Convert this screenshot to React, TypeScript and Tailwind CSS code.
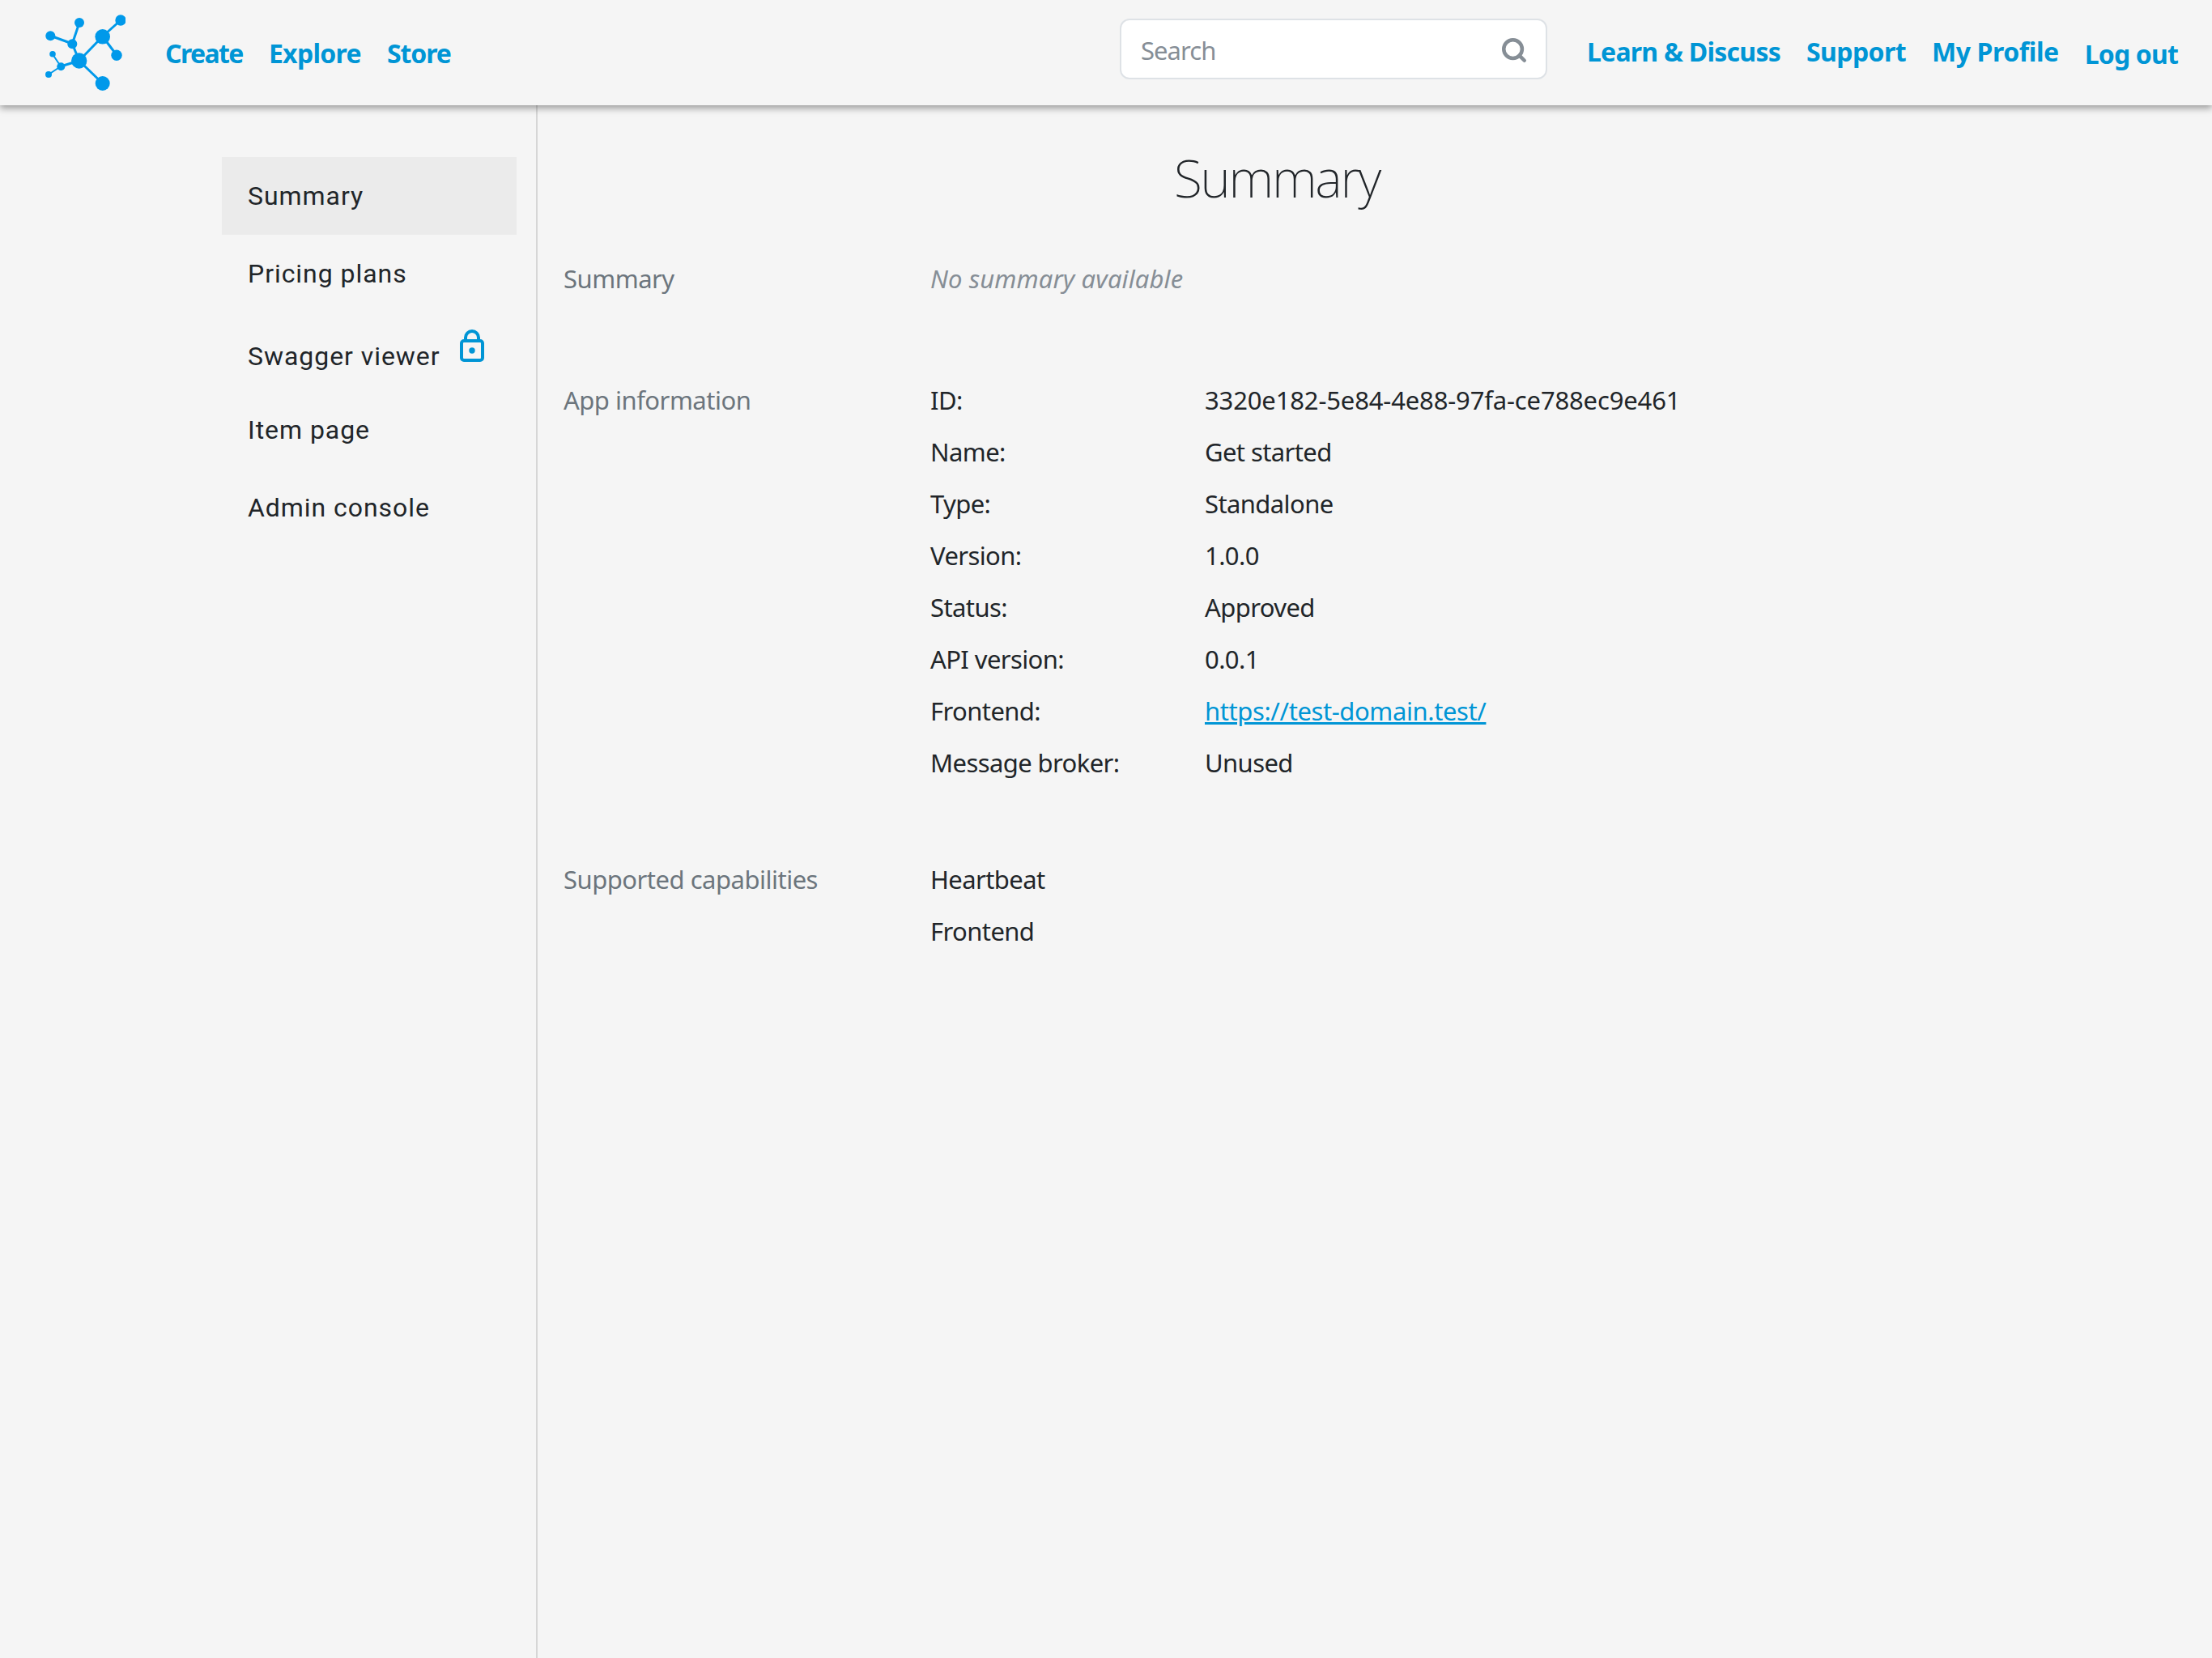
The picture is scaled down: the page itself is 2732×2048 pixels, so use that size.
import { Search } from "lucide-react";

const sideItems = ["Summary", "Pricing plans", "Swagger viewer", "Item page", "Admin console"];

const appInfo = [
  ["ID:", "3320e182-5e84-4e88-97fa-ce788ec9e461"],
  ["Name:", "Get started"],
  ["Type:", "Standalone"],
  ["Version:", "1.0.0"],
  ["Status:", "Approved"],
  ["API version:", "0.0.1"],
  ["Frontend:", "https://test-domain.test/"],
  ["Message broker:", "Unused"],
];

function Logo() {
  const lines = [
    [126.7, 45, 149, 25],
    [126.7, 45, 144, 68],
    [126.7, 45, 97.7, 75],
    [97.7, 75, 126.7, 103],
    [97.7, 75, 89.3, 54],
    [89.3, 54, 98, 28],
    [89.3, 54, 62, 44],
    [97.7, 75, 75, 82],
    [75, 82, 65, 67],
    [75, 82, 60, 92],
  ];
  const dots = [
    [149, 25, 6.7],
    [126.7, 45.3, 9.3],
    [144, 68.3, 6.7],
    [126.7, 103, 9],
    [97.7, 75, 9.7],
    [98, 28, 6],
    [89.3, 54.3, 6],
    [62.3, 44.3, 6],
    [65, 66.7, 3.8],
    [75.3, 82.3, 5],
    [60, 92, 4],
  ];
  return (
    <svg viewBox="50 15 105 100" className="h-[100px] w-[105px] shrink-0">
      {lines.map(([x1, y1, x2, y2], i) => (
        <line key={i} x1={x1} y1={y1} x2={x2} y2={y2} stroke="#0099ea" strokeWidth={i > 7 ? 2 : 3} />
      ))}
      {dots.map(([cx, cy, r], i) => (
        <circle key={i} cx={cx} cy={cy} r={r} fill="#0099ea" />
      ))}
    </svg>
  );
}

function LockIcon() {
  return (
    <svg viewBox="0 0 30 40" className="ml-[24px] mb-[26px] h-[40px] w-[30px]" fill="none">
      <path d="M7 15V10a8 8 0 0 1 16 0v5" stroke="#0095d5" strokeWidth="4" />
      <rect x="2" y="14" width="26" height="24" rx="3" stroke="#0095d5" strokeWidth="4" />
      <circle cx="15" cy="26" r="3.7" fill="#0095d5" />
    </svg>
  );
}

function Row({ label, children }: { label: string; children: React.ReactNode }) {
  return (
    <div className="flex">
      <div className="w-[453px] tracking-[-0.5px] text-[#6c757d]">{label}</div>
      <div className="flex-1">{children}</div>
    </div>
  );
}

export default function App() {
  return (
    <div className="flex min-h-screen flex-col bg-[#f5f5f5] font-['Noto_Sans',sans-serif] text-[31px] leading-[64px] tracking-[-0.6px] text-[#212529]">
      <header className="relative z-10 flex h-[130px] items-center bg-[#f5f5f5] pl-[50px] shadow-[0_4px_8px_rgba(0,0,0,0.35)]">
        <Logo />
        <nav className="ml-[49px] flex gap-[32px] pt-[2px] text-[32px] font-bold tracking-[-1.1px] text-[#0095d5]">
          <a className="tracking-[-1.6px]">Create</a>
          <a className="tracking-[-0.7px]">Explore</a>
          <a>Store</a>
        </nav>
        <div className="mb-[9px] ml-auto flex h-[75px] w-[528px] items-center justify-between rounded-[12px] border-2 border-[#dee2e6] bg-white pl-[24px] pr-[22px] pt-[2px] font-normal tracking-[-0.9px] text-[#868e96]">
          <span>Search</span>
          <Search className="h-[34px] w-[34px] text-[#868e96]" strokeWidth={3.2} />
        </div>
        <nav className="ml-[49px] mr-[42px] flex gap-[32px] text-[32px] font-bold text-[#0095d5]">
          <a className="tracking-[-0.75px]">Learn &amp; Discuss</a>
          <a className="tracking-[-0.6px]">Support</a>
          <a className="tracking-[-0.4px]">My Profile</a>
          <a className="mt-[3px] tracking-[-0.85px]">Log out</a>
        </nav>
      </header>

      <main className="flex flex-1">
        <aside className="w-[664px] shrink-0 border-r-2 border-[#d6d6d6] pl-[274px] pr-[24px] pt-[64px] font-['Roboto',sans-serif] text-[32px] tracking-[0.95px]">
          {sideItems.map((item, i) => (
            <div
              key={item}
              className={`flex h-[96px] items-center pl-[32px] ${i === 0 ? "bg-[#ebebeb]" : ""} ${i === 2 ? "h-[97px] pt-[10px]" : ""}`}
            >
              {item}
              {i === 2 && <LockIcon />}
            </div>
          ))}
        </aside>

        <section className="flex-1 pl-[32px] pt-[42px]">
          <h1 className="w-[1762px] text-center text-[64px] font-extralight leading-[96px] tracking-[-2.2px]">Summary</h1>
          <div className="mt-[44px]">
            <Row label="Summary">
              <span className="italic tracking-[0.1px] text-[#868e96]">No summary available</span>
            </Row>
          </div>
          <div className="mt-[86px]">
            <div className="flex">
              <div className="w-[453px] tracking-[-0.5px] text-[#6c757d]">App information</div>
              <div>
                {appInfo.map(([key, value]) => (
                  <div key={key} className="flex">
                    <div className="w-[339px]">{key}</div>
                    {key === "Frontend:" ? (
                      <a className="tracking-[-0.4px] text-[#0095d5] underline">{value}</a>
                    ) : (
                      <div className={key === "ID:" ? "tracking-[-0.15px]" : ""}>{value}</div>
                    )}
                  </div>
                ))}
              </div>
            </div>
          </div>
          <div className="mt-[80px]">
            <Row label="Supported capabilities">
              <div>Heartbeat</div>
              <div>Frontend</div>
            </Row>
          </div>
        </section>
      </main>
    </div>
  );
}
